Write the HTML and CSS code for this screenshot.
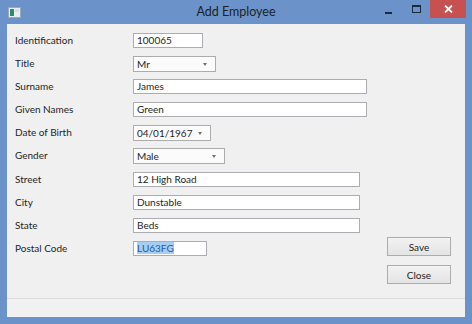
FILE: index.html
```html
<!DOCTYPE html>
<html lang="en">
<head>
  <meta charset="UTF-8">
  <title>Add Employee</title>
  <link rel="stylesheet" href="styles.css">
</head>
<body>

<div class="window">
  <div class="titlebar">
    <svg class="app-icon" width="13" height="11" viewBox="0 0 13 11">
      <rect x="0.5" y="0.5" width="12" height="10" fill="#e9eef3" stroke="#9aa8b8"/>
      <rect x="2" y="2" width="4" height="7" fill="#2f8a6a"/>
      <rect x="7" y="2" width="4" height="3" fill="#d8dee6"/>
    </svg>
    <div class="title">Add Employee</div>
    <div class="controls">
      <span class="ctl min"><svg width="8" height="8" viewBox="0 0 8 8"><rect x="0" y="6" width="7" height="2" fill="#1c2a3c"/></svg></span>
      <span class="ctl max"><svg width="9" height="8" viewBox="0 0 9 8"><rect x="0.5" y="0.5" width="8" height="7" fill="none" stroke="#1c2a3c"/><rect x="0" y="0" width="9" height="2" fill="#1c2a3c"/></svg></span>
      <span class="ctl close"><svg width="9" height="8" viewBox="0 0 9 8"><path d="M1 0.5 L8 7.5 M8 0.5 L1 7.5" stroke="#fff" stroke-width="1.8"/></svg></span>
    </div>
  </div>

  <div class="client">
    <div class="main">
      <div class="form">
        <label>Identification</label>
        <div class="field"><div class="text w-id">100065</div></div>

        <label>Title</label>
        <div class="field"><div class="combo w-title">Mr<span class="arrow"></span></div></div>

        <label>Surname</label>
        <div class="field"><div class="text w-long">James</div></div>

        <label>Given Names</label>
        <div class="field"><div class="text w-long">Green</div></div>

        <label>Date of Birth</label>
        <div class="field"><div class="combo w-dob">04/01/1967<span class="arrow"></span></div></div>

        <label>Gender</label>
        <div class="field"><div class="combo w-gender">Male<span class="arrow"></span></div></div>

        <label>Street</label>
        <div class="field"><div class="text w-addr">12 High Road</div></div>

        <label>City</label>
        <div class="field"><div class="text w-addr">Dunstable</div></div>

        <label>State</label>
        <div class="field"><div class="text w-addr">Beds</div></div>

        <label>Postal Code</label>
        <div class="field"><div class="text w-post"><span class="sel">LU63FG</span></div></div>
      </div>

      <div class="actions">
        <button class="btn">Save</button>
        <button class="btn">Close</button>
      </div>
    </div>
    <div class="statusbar"></div>
  </div>
</div>

</body>
</html>
```

FILE: styles.css
```css
body {
  margin: 0;
  font-family: Lato, "Open Sans", sans-serif;
  background-color: #6b93c9;
}

.window {
  width: 472px;
  height: 324px;
  display: flex;
  flex-direction: column;
  background-color: #6b93c9;
}

/* Title bar */
.titlebar {
  height: 24px;
  display: flex;
  align-items: flex-start;
  position: relative;
}

.app-icon {
  margin: 7px 0 0 8px;
}

.title {
  position: absolute;
  left: 0;
  right: 0;
  top: 4px;
  text-align: center;
  font-size: 12.5px;
  color: #1b1f26;
}

.controls {
  margin-left: auto;
  margin-right: 6px;
  display: flex;
  height: 18px;
}

.ctl {
  display: flex;
  align-items: center;
  justify-content: center;
}

.ctl.min { width: 26px; padding-top: 2px; }
.ctl.max { width: 28px; }

.ctl.close {
  width: 36px;
  background-color: #c75050;
}

/* Client area */
.client {
  flex: 1;
  margin: 0 7px 7px 7px;
  background-color: #f0f0f0;
  display: flex;
  flex-direction: column;
}

.main {
  flex: 1;
  display: flex;
  font-size: 10px;
  color: #1e1e1e;
}

.form {
  display: grid;
  grid-template-columns: 118px auto;
  grid-auto-rows: 15px;
  row-gap: 8.1px;
  padding: 9px 0 0 8px;
  align-content: start;
}

.form label {
  line-height: 15px;
}

.field {
  display: flex;
}

.text, .combo {
  box-sizing: border-box;
  height: 15px;
  border: 1px solid #abadb3;
  background-color: #fff;
  padding-left: 3px;
  line-height: 13px;
  position: relative;
}

.combo {
  height: 16px;
  border-color: #acacac;
  background-color: #fbfbfb;
  line-height: 14px;
}

.arrow {
  position: absolute;
  right: 8px;
  top: 6px;
  border-left: 2.5px solid transparent;
  border-right: 2.5px solid transparent;
  border-top: 3px solid #707070;
}

.w-id { width: 70px; }
.w-title { width: 83px; }
.w-long { width: 234px; }
.w-dob { width: 78px; }
.w-gender { width: 92px; }
.w-addr { width: 227px; }
.w-post { width: 74px; }

.sel {
  background-color: #a6cdf3;
  color: #2a5a9c;
}

.actions {
  margin-left: auto;
  margin-right: 14px;
  margin-bottom: 14px;
  align-self: flex-end;
  display: flex;
  flex-direction: column;
  gap: 9px;
}

.btn {
  width: 64px;
  height: 19px;
  padding: 0;
  font-family: inherit;
  font-size: 10px;
  color: #1e1e1e;
  border: 1px solid #acacac;
  background: linear-gradient(#f2f2f2, #e4e4e4);
}

.statusbar {
  height: 18px;
  border-top: 1px solid #dcdcdc;
  background-color: #f1f1f1;
}
```
